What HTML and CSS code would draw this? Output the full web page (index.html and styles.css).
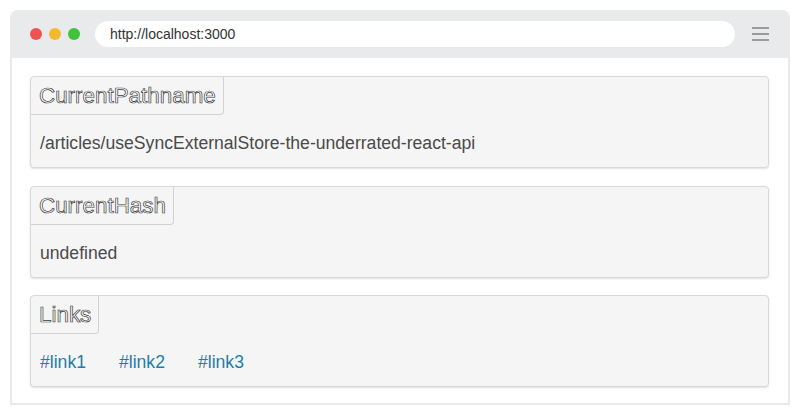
FILE: index.html
```html
<!DOCTYPE html>
<html>
<head>
<meta charset="utf-8">
<link rel="stylesheet" href="styles.css">
</head>
<body>
<div class="window">
  <div class="toolbar">
    <div class="dots">
      <span class="dot red"></span>
      <span class="dot yellow"></span>
      <span class="dot green"></span>
    </div>
    <div class="url">http://localhost:3000</div>
    <div class="menu"><span></span><span></span><span></span></div>
  </div>
  <div class="content">
    <div class="card">
      <div class="tab">CurrentPathname</div>
      <div class="body">/articles/useSyncExternalStore-the-underrated-react-api</div>
    </div>
    <div class="card">
      <div class="tab">CurrentHash</div>
      <div class="body">undefined</div>
    </div>
    <div class="card">
      <div class="tab">Links</div>
      <div class="body links">
        <a href="#link1">#link1</a>
        <a href="#link2">#link2</a>
        <a href="#link3">#link3</a>
      </div>
    </div>
  </div>
</div>
</body>
</html>
```
FILE: styles.css
```css
html, body {
  margin: 0;
  padding: 0;
  background: #fff;
  font-family: "Liberation Sans", Arial, sans-serif;
}
.window {
  margin: 10px 10px 0 10px;
  width: 780px;
}
.toolbar {
  height: 48px;
  background: #e9eaec;
  border-radius: 8px 8px 0 0;
  display: flex;
  align-items: center;
  padding: 0 20px 0 20px;
  box-sizing: border-box;
}
.dots {
  display: flex;
  gap: 7px;
  width: 65px;
}
.dot {
  width: 12px;
  height: 12px;
  border-radius: 50%;
  display: block;
}
.red { background: #ee5350; }
.yellow { background: #f4b92f; }
.green { background: #3fc33b; }
.url {
  width: 640px;
  height: 26px;
  background: #fff;
  border-radius: 13px;
  box-sizing: border-box;
  padding-left: 15px;
  font-size: 14px;
  line-height: 26px;
  color: #333;
}
.menu {
  margin-left: 17px;
  display: flex;
  flex-direction: column;
  gap: 4px;
  width: 17px;
}
.menu span {
  display: block;
  height: 2px;
  background: #9b9b9b;
}
.content {
  border: 2px solid #e9eaec;
  border-top: none;
  padding: 18px 19px 16px 18px;
  display: flex;
  flex-direction: column;
  gap: 17.5px;
}
.card {
  background: #f5f5f5;
  border: 1px solid #d9d9d9;
  border-radius: 4px;
  box-shadow: 0 1px 2px rgba(0,0,0,0.12);
}
.tab {
  display: inline-block;
  height: 37px;
  line-height: 37px;
  padding: 0 7px 0 8px;
  border-right: 1px solid #d2d2d2;
  border-bottom: 1px solid #d2d2d2;
  border-radius: 0 0 4px 0;
  font-size: 22.4px;
  color: #fff;
  -webkit-text-stroke: 0.7px #3a3a3a;
}
.body {
  padding: 18px 9px 14px 9px;
  font-size: 17.6px;
  line-height: 20px;
  color: #4a4a4a;
}
.links {
  display: flex;
  gap: 33px;
}
.links a {
  color: #1f7ea6;
  text-decoration: none;
}
```
